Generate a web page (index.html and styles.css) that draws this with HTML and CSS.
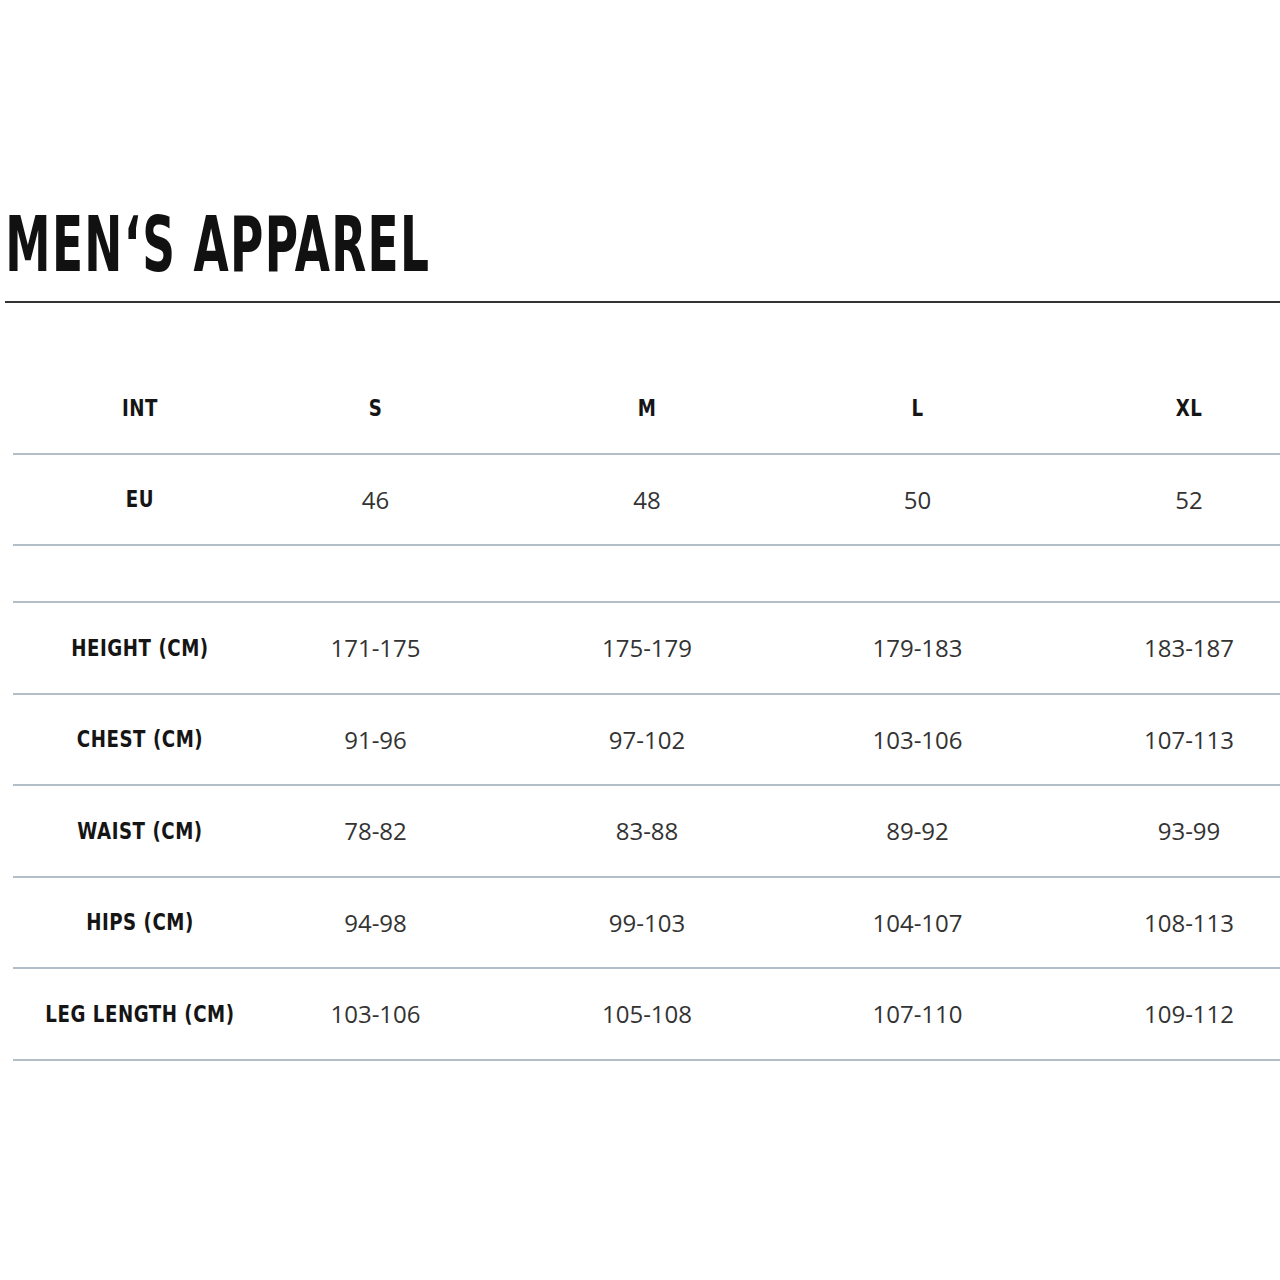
FILE: index.html
```html
<!DOCTYPE html>
<html lang="en">
<head>
<meta charset="utf-8">
<title>Men's Apparel Size Chart</title>
<link rel="stylesheet" href="styles.css">
</head>
<body>
<div class="page">
  <h1 class="title">MEN‘S APPAREL</h1>
  <hr class="rule">
  <div class="chart">
    <div class="row">
      <div class="cell label">INT</div>
      <div class="cell label">S</div>
      <div class="cell label">M</div>
      <div class="cell label">L</div>
      <div class="cell label last">XL</div>
    </div>
    <div class="row">
      <div class="cell label">EU</div>
      <div class="cell">46</div>
      <div class="cell">48</div>
      <div class="cell">50</div>
      <div class="cell last">52</div>
    </div>
    <div class="row spacer"></div>
    <div class="row">
      <div class="cell label">HEIGHT (CM)</div>
      <div class="cell">171-175</div>
      <div class="cell">175-179</div>
      <div class="cell">179-183</div>
      <div class="cell last">183-187</div>
    </div>
    <div class="row">
      <div class="cell label">CHEST (CM)</div>
      <div class="cell">91-96</div>
      <div class="cell">97-102</div>
      <div class="cell">103-106</div>
      <div class="cell last">107-113</div>
    </div>
    <div class="row">
      <div class="cell label">WAIST (CM)</div>
      <div class="cell">78-82</div>
      <div class="cell">83-88</div>
      <div class="cell">89-92</div>
      <div class="cell last">93-99</div>
    </div>
    <div class="row">
      <div class="cell label">HIPS (CM)</div>
      <div class="cell">94-98</div>
      <div class="cell">99-103</div>
      <div class="cell">104-107</div>
      <div class="cell last">108-113</div>
    </div>
    <div class="row">
      <div class="cell label">LEG LENGTH (CM)</div>
      <div class="cell">103-106</div>
      <div class="cell">105-108</div>
      <div class="cell">107-110</div>
      <div class="cell last">109-112</div>
    </div>
  </div>
</div>
</body>
</html>
```

FILE: styles.css
```css
html, body {
  margin: 0;
  padding: 0;
  background: #ffffff;
}
.page {
  width: 1280px;
  padding-top: 205px;
  overflow: hidden;
}
.title {
  margin: 0 0 16px 0;
  padding-left: 8px;
  font-family: "DejaVu Sans Condensed", "Liberation Sans", sans-serif;
  font-weight: 700;
  font-size: 76px;
  line-height: 80px;
  letter-spacing: 2px;
  color: #111111;
  transform: scaleX(0.665);
  transform-origin: left center;
  white-space: nowrap;
}
.rule {
  margin: 0 0 0 5px;
  height: 2px;
  border: 0;
  background: #333333;
}
.chart {
  margin: 60px 0 0 13px;
  width: 1267px;
}
.row {
  display: grid;
  grid-template-columns: 254px 217px 326px 215px 255px;
  height: 91.5px;
  box-sizing: border-box;
  border-bottom: 2px solid #b2bfc8;
  align-items: center;
}
.row.spacer {
  height: 57px;
}
.cell {
  text-align: center;
  font-family: "Open Sans", "Liberation Sans", sans-serif;
  font-size: 24px;
  color: #333333;
  white-space: nowrap;
}
.cell.last {
  padding-left: 73px;
}
.cell.label {
  font-family: "DejaVu Sans Condensed", "Liberation Sans", sans-serif;
  font-weight: 700;
  font-size: 23px;
  letter-spacing: 0.6px;
  color: #151515;
  transform: scaleX(0.88);
}
.cell.label.last {
  transform-origin: 164px center;
}
```
